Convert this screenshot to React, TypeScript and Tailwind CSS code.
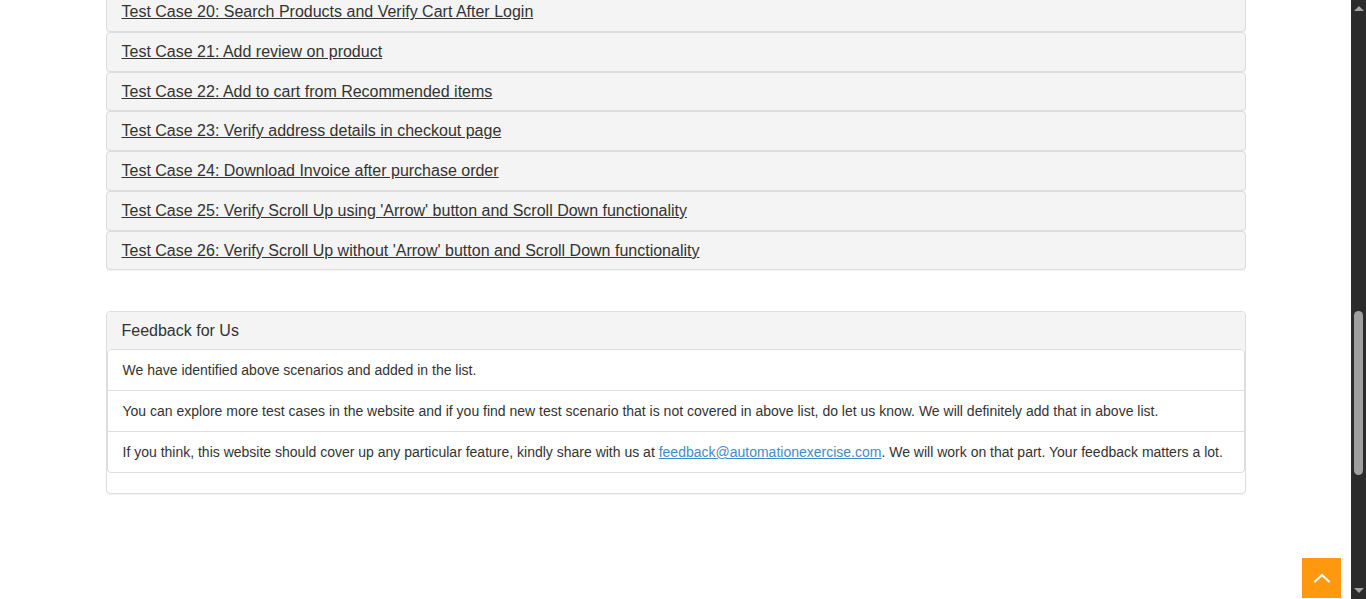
const testCases = [
    "Test Case 20: Search Products and Verify Cart After Login",
    "Test Case 21: Add review on product",
    "Test Case 22: Add to cart from Recommended items",
    "Test Case 23: Verify address details in checkout page",
    "Test Case 24: Download Invoice after purchase order",
    "Test Case 25: Verify Scroll Up using 'Arrow' button and Scroll Down functionality",
    "Test Case 26: Verify Scroll Up without 'Arrow' button and Scroll Down functionality",
];

const App = () => {
    return (
        <div className="relative flex h-[599px] overflow-hidden bg-white text-[#333] font-['Liberation_Sans',Arial,sans-serif]">
            <main className="flex-1">
                <div className="mx-auto w-[1170px] px-[15px] -mt-[7.8px]">
                    <div className="flex flex-col">
                        {testCases.map(tc => (
                            <div
                                key={tc}
                                className="rounded-[4px] border border-[#ddd] bg-[#f4f4f4] px-[15px] py-[10px] shadow-[0_1px_1px_rgba(0,0,0,0.05)]"
                            >
                                <a href="#" className="block text-[16px] leading-[17.75px] text-[#333] underline">
                                    {tc}
                                </a>
                            </div>
                        ))}
                    </div>

                    <div className="mt-[41px] rounded-[4px] border border-[#ddd] pb-[20px] shadow-[0_1px_1px_rgba(0,0,0,0.05)]">
                        <div className="rounded-t-[3px] bg-[#f4f4f4] px-[15px] pt-[10px] pb-[9px] text-[16px] leading-[17.6px]">
                            Feedback for Us
                        </div>
                        <ul className="rounded-[4px] border border-[#ddd] text-[14px] leading-[20px]">
                            <li className="px-[15px] py-[10px] border-b border-[#ddd]">
                                We have identified above scenarios and added in the list.
                            </li>
                            <li className="px-[15px] py-[10px] border-b border-[#ddd]">
                                You can explore more test cases in the website and if you find new test scenario that is not covered in above list, do let us know. We will definitely add that in above list.
                            </li>
                            <li className="px-[15px] py-[10px]">
                                If you think, this website should cover up any particular feature, kindly share with us at{" "}
                                <a href="#" className="text-[#428bca] underline">feedback@automationexercise.com</a>
                                . We will work on that part. Your feedback matters a lot.
                            </li>
                        </ul>
                    </div>
                </div>
            </main>

            {/* browser scrollbar */}
            <aside className="flex w-[15px] flex-col items-center bg-[#2b2b2b]">
                <div className="mt-[6px] h-0 w-0 border-x-[5px] border-b-[5px] border-x-transparent border-b-[#a3a3a3]" />
                <div className="mt-[300px] h-[164px] w-[9px] rounded-full bg-[#9f9f9f]" />
                <div className="mt-auto mb-[6px] h-0 w-0 border-x-[5px] border-t-[5px] border-x-transparent border-t-[#a3a3a3]" />
            </aside>

            <a
                href="#"
                className="absolute bottom-[1px] right-[25px] flex h-[40px] w-[39px] items-center justify-center bg-[#fe980f] text-white"
            >
                <svg width="18" height="12" viewBox="0 0 18 12" fill="none" stroke="currentColor" strokeWidth="2.2" strokeLinecap="round" strokeLinejoin="round">
                    <path d="M2 9.5 L9 3 L16 9.5" />
                </svg>
            </a>
        </div>
    );
};

export default App;
